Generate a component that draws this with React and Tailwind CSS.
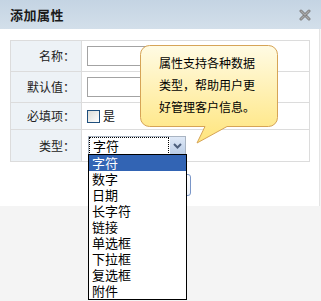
const FONT = { fontFamily: '"Noto Sans CJK SC", "Noto Sans", sans-serif' }

const options = ['字符', '数字', '日期', '长字符', '链接', '单选框', '下拉框', '复选框', '附件']

function Row({ label, h, children, last }) {
  return (
    <div className={`flex ${last ? '' : 'border-b border-[#dcdcdc]'} ${h}`}>
      <div className="w-[71px] shrink-0 bg-[#edf2f6] border-r border-[#dcdcdc] flex items-center justify-end pr-[6px] text-[12px] text-[#222]">
        {label}
      </div>
      <div className="flex-1 flex items-center pl-[5px]">{children}</div>
    </div>
  )
}

export default function App() {
  return (
    <div className="relative w-[321px] h-[301px] bg-[#f4f4f4] overflow-hidden" style={FONT}>
      <div className="h-[29px] w-full bg-gradient-to-b from-[#c4d4e3] to-[#d3dfea] flex items-center justify-between pl-[10px] pr-[10px]">
        <span className="text-[13px] font-bold text-[#1a1a1a] tracking-[0.5px]">添加属性</span>
        <svg width="12" height="12" viewBox="0 0 12 12">
          <path d="M2 2 L10 10 M10 2 L2 10" stroke="#7d7d7d" strokeWidth="3" strokeLinecap="round" />
          <path d="M2 2 L10 10 M10 2 L2 10" stroke="#a8a8a8" strokeWidth="1.2" strokeLinecap="round" />
        </svg>
      </div>

      <div className="w-[320px] h-[177px] bg-white border-r border-[#e4e4e4] pl-[10px] pt-[11px]">
        <div className="w-[300px] border border-[#dcdcdc]">
          <Row label="名称：" h="h-[31px]">
            <div className="w-[150px] h-[20px] border border-[#a3a3a3] bg-white" />
          </Row>
          <Row label="默认值：" h="h-[31px]">
            <div className="w-[150px] h-[20px] border border-[#a3a3a3] bg-white" />
          </Row>
          <Row label="必填项：" h="h-[27px]">
            <div className="w-[13px] h-[13px] border border-[#1f4f7d] bg-gradient-to-br from-[#dcdcd6] to-white" />
            <span className="ml-[3px] text-[12px] text-[#111]">是</span>
          </Row>
          <Row label="类型：" h="h-[31px]" last>
            <div className="ml-[1px] w-[98px] h-[20px] flex items-stretch border border-[#a9b4c2] bg-white">
              <div className="flex-1 border border-dotted border-black flex items-center pl-[3px] text-[13px] leading-none text-black">
                字符
              </div>
              <div className="w-[15px] ml-[1px] bg-gradient-to-b from-[#dfe9f7] to-[#b9cce6] flex items-center justify-center">
                <svg width="9" height="6" viewBox="0 0 9 6">
                  <path d="M1 1 L4.5 4.5 L8 1" stroke="#4d5f7c" strokeWidth="2" fill="none" />
                </svg>
              </div>
            </div>
          </Row>
        </div>
        {/* button sits under the open dropdown; only its right edge shows */}
        <div className="mt-[12px] ml-[119px] w-[62px] h-[22px] rounded-[3px] border border-[#7a96c8] bg-gradient-to-b from-white to-[#eef2f8]" />
      </div>

      <div className="absolute left-[139px] top-[44px] w-[141px] h-[101px]">
        <svg width="141" height="101" viewBox="0 0 141 101" className="absolute inset-0">
          <defs>
            <linearGradient id="tip" x1="0" y1="0" x2="0" y2="1">
              <stop offset="0" stopColor="#fffbe4" />
              <stop offset="1" stopColor="#ffe57c" />
            </linearGradient>
          </defs>
          <path
            d="M10.5 1.5 H129.5 A9 9 0 0 1 138.5 10.5 V73.5 A9 9 0 0 1 129.5 82.5 H88 L58 99 L66 82.5 H10.5 A9 9 0 0 1 1.5 73.5 V10.5 A9 9 0 0 1 10.5 1.5 Z"
            fill="url(#tip)"
            stroke="#d6a456"
            strokeWidth="1"
          />
        </svg>
        <div className="absolute left-[20px] top-[8px] text-[12px] leading-[22px] text-black whitespace-nowrap">
          <div>属性支持各种数据</div>
          <div>类型，帮助用户更</div>
          <div>好管理客户信息。</div>
        </div>
      </div>

      <div className="absolute left-[88px] top-[154px] w-[99px] border border-black bg-white">
        {options.map((o, i) => (
          <div
            key={o}
            className={`h-[16px] pl-[3px] text-[13px] leading-[16px] ${i === 0 ? 'bg-[#3264b4] text-white' : 'text-black'}`}
          >
            {o}
          </div>
        ))}
      </div>
    </div>
  )
}
